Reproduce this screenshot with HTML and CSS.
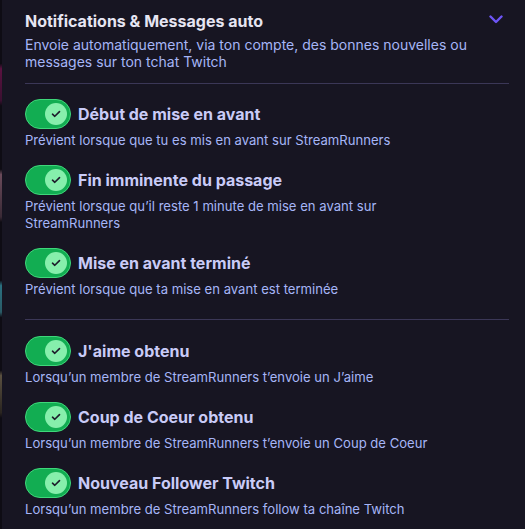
FILE: index.html
```html
<!DOCTYPE html>
<html lang="fr">
<head>
<meta charset="utf-8">
<link rel="stylesheet" href="styles.css">
</head>
<body>
<div class="edge"></div>
<main class="panel">
  <header class="head">
    <h1 class="title">Notifications &amp; Messages auto</h1>
    <svg class="chev" width="14" height="9" viewBox="0 0 14 9"><path d="M1.5 1.5 L7 7 L12.5 1.5" fill="none" stroke="#6d55f6" stroke-width="2.4" stroke-linecap="round" stroke-linejoin="round"/></svg>
  </header>
  <p class="intro">Envoie automatiquement, via ton compte, des bonnes nouvelles ou messages sur ton tchat Twitch</p>
  <hr class="sep">
  <section class="group">
    <div class="item">
      <div class="row"><span class="toggle"><span class="knob"><svg width="10" height="8" viewBox="0 0 10 8"><path d="M1.5 4.2 L3.8 6.3 L8.5 1.6" fill="none" stroke="#1d1b2b" stroke-width="1.6" stroke-linecap="round" stroke-linejoin="round"/></svg></span></span><span class="label">Début de mise en avant</span></div>
      <p class="desc">Prévient lorsque que tu es mis en avant sur StreamRunners</p>
    </div>
    <div class="item">
      <div class="row"><span class="toggle"><span class="knob"><svg width="10" height="8" viewBox="0 0 10 8"><path d="M1.5 4.2 L3.8 6.3 L8.5 1.6" fill="none" stroke="#1d1b2b" stroke-width="1.6" stroke-linecap="round" stroke-linejoin="round"/></svg></span></span><span class="label">Fin imminente du passage</span></div>
      <p class="desc">Prévient lorsque qu’il reste 1 minute de mise en avant sur StreamRunners</p>
    </div>
    <div class="item">
      <div class="row"><span class="toggle"><span class="knob"><svg width="10" height="8" viewBox="0 0 10 8"><path d="M1.5 4.2 L3.8 6.3 L8.5 1.6" fill="none" stroke="#1d1b2b" stroke-width="1.6" stroke-linecap="round" stroke-linejoin="round"/></svg></span></span><span class="label">Mise en avant terminé</span></div>
      <p class="desc">Prévient lorsque que ta mise en avant est terminée</p>
    </div>
  </section>
  <hr class="sep sep2">
  <section class="group">
    <div class="item">
      <div class="row"><span class="toggle"><span class="knob"><svg width="10" height="8" viewBox="0 0 10 8"><path d="M1.5 4.2 L3.8 6.3 L8.5 1.6" fill="none" stroke="#1d1b2b" stroke-width="1.6" stroke-linecap="round" stroke-linejoin="round"/></svg></span></span><span class="label">J'aime obtenu</span></div>
      <p class="desc">Lorsqu’un membre de StreamRunners t’envoie un J’aime</p>
    </div>
    <div class="item">
      <div class="row"><span class="toggle"><span class="knob"><svg width="10" height="8" viewBox="0 0 10 8"><path d="M1.5 4.2 L3.8 6.3 L8.5 1.6" fill="none" stroke="#1d1b2b" stroke-width="1.6" stroke-linecap="round" stroke-linejoin="round"/></svg></span></span><span class="label">Coup de Coeur obtenu</span></div>
      <p class="desc">Lorsqu’un membre de StreamRunners t’envoie un Coup de Coeur</p>
    </div>
    <div class="item">
      <div class="row"><span class="toggle"><span class="knob"><svg width="10" height="8" viewBox="0 0 10 8"><path d="M1.5 4.2 L3.8 6.3 L8.5 1.6" fill="none" stroke="#1d1b2b" stroke-width="1.6" stroke-linecap="round" stroke-linejoin="round"/></svg></span></span><span class="label">Nouveau Follower Twitch</span></div>
      <p class="desc">Lorsqu’un membre de StreamRunners follow ta chaîne Twitch</p>
    </div>
  </section>
</main>
</body>
</html>
```
FILE: styles.css
```css
html, body {
  margin: 0;
  padding: 0;
  background: #171522;
  height: 100%;
  overflow: hidden;
}
body {
  display: flex;
  font-family: Inter, "Noto Sans", sans-serif;
}
.edge {
  width: 2px;
  flex: none;
  background: linear-gradient(to bottom, #0e0c14 0%, #0e0c14 12%, #5a1240 13%, #3a1030 19%, #0e0c14 20%, #0e0c14 32%, #6a4a5a 33%, #3a2a36 41%, #0e0c14 42%, #0e0c14 53%, #2a7080 54%, #2a5a66 59%, #0e0c14 60%, #0e0c14 70%, #5a5040 71%, #2a2520 78%, #0e0c14 79%);
}
.panel {
  flex: 1;
  padding: 10px 16px 0 23px;
}
.head {
  display: flex;
  align-items: center;
  justify-content: space-between;
}
.title {
  margin: 0;
  font-size: 16px;
  line-height: 22px;
  font-weight: 700;
  color: #e6e5f2;
}
.chev {
  margin-right: 6px;
  margin-top: -4px;
}
.intro {
  margin: 4px 0 0;
  font-size: 14px;
  line-height: 17px;
  color: #a6b5f7;
}
.sep {
  border: 0;
  height: 1px;
  background: #3b3757;
  margin: 13px 0 15px;
}
.sep2 {
  margin: 21px 0 16px;
}
.group {
  display: flex;
  flex-direction: column;
  gap: 16px;
}
.row {
  display: flex;
  align-items: center;
  gap: 7px;
}
.toggle {
  box-sizing: border-box;
  width: 46px;
  height: 30px;
  border-radius: 15px;
  background: #12ad52;
  border: 1px solid #3fd77a;
  display: flex;
  align-items: center;
  justify-content: flex-end;
  padding-right: 3px;
}
.knob {
  width: 22px;
  height: 22px;
  border-radius: 50%;
  background: #86efac;
  display: flex;
  align-items: center;
  justify-content: center;
}
.label {
  font-size: 16px;
  font-weight: 700;
  color: #c9cbf7;
}
.desc {
  margin: 3px 0 0;
  max-width: 420px;
  font-size: 13.1px;
  line-height: 17px;
  color: #a6b5f7;
}
```
